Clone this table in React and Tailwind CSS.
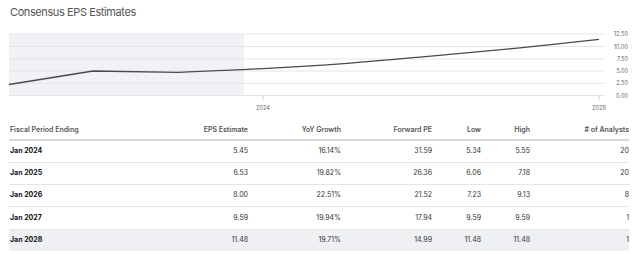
const points = [
  [9, 84.5],
  [93, 71],
  [178, 72.3],
  [263, 68.6],
  [347, 63.3],
  [431, 56.1],
  [515, 48.3],
  [599, 39.3],
];

const gridY = [34, 46.5, 59, 71, 83.3, 95.5];
const yLabels = ["12.50", "10.00", "7.50", "5.00", "2.50", "0.00"];

const rows = [
  { period: "Jan 2024", eps: "5.45", yoy: "16.14%", pe: "31.59", low: "5.34", high: "5.55", n: "20" },
  { period: "Jan 2025", eps: "6.53", yoy: "19.82%", pe: "26.36", low: "6.06", high: "7.18", n: "20" },
  { period: "Jan 2026", eps: "8.00", yoy: "22.51%", pe: "21.52", low: "7.23", high: "9.13", n: "8" },
  { period: "Jan 2027", eps: "9.59", yoy: "19.94%", pe: "17.94", low: "9.59", high: "9.59", n: "1" },
  { period: "Jan 2028", eps: "11.48", yoy: "19.71%", pe: "14.99", low: "11.48", high: "11.48", n: "1" },
];

// straight lines for the history, a gentle curve for the estimates
function linePath(pts) {
  let d = `M${pts[0][0]},${pts[0][1]} L${pts[1][0]},${pts[1][1]} L${pts[2][0]},${pts[2][1]}`;
  for (let i = 2; i < pts.length - 1; i++) {
    const p0 = pts[Math.max(i - 1, 2)];
    const p1 = pts[i];
    const p2 = pts[i + 1];
    const p3 = pts[Math.min(i + 2, pts.length - 1)];
    const t = 6;
    const c1 = [p1[0] + (p2[0] - p0[0]) / t, p1[1] + (p2[1] - p0[1]) / t];
    const c2 = [p2[0] - (p3[0] - p1[0]) / t, p2[1] - (p3[1] - p1[1]) / t];
    d += ` C${c1[0]},${c1[1]} ${c2[0]},${c2[1]} ${p2[0]},${p2[1]}`;
  }
  return d;
}

function EpsChart() {
  return (
    <svg width="640" height="88" viewBox="0 28 640 88" className="block">
      <rect x="9" y="34" width="235" height="61.5" fill="#f1f2f5" />
      {gridY.map((y) => (
        <line key={y} x1="9" x2="605" y1={y} y2={y} stroke="#e4e5e8" strokeWidth="1" />
      ))}
      <line x1="263" x2="263" y1="96" y2="100" stroke="#d0d0d0" strokeWidth="1" />
      <line x1="599" x2="599" y1="96" y2="100" stroke="#d0d0d0" strokeWidth="1" />
      <path d={linePath(points)} fill="none" stroke="#4a4a4a" strokeWidth="1.3" strokeLinejoin="round" />
      {yLabels.map((label, i) => (
        <text
          key={label}
          x="628"
          y={gridY[i] + 2}
          textAnchor="end"
          fontSize="5.6"
          fill="#666"
          fontFamily="Inter, sans-serif"
        >
          {label}
        </text>
      ))}
      <text x="263" y="110" textAnchor="middle" fontSize="5.6" fill="#666" fontFamily="Inter, sans-serif">
        2024
      </text>
      <text x="599" y="110" textAnchor="middle" fontSize="5.6" fill="#666" fontFamily="Inter, sans-serif">
        2028
      </text>
    </svg>
  );
}

export default function App() {
  const numCell = "text-right font-normal text-[#333]";
  return (
    <div className="h-[254px] w-[640px] overflow-hidden bg-white font-['Inter',sans-serif]">
      <h2 className="pl-[10px] pt-[5px] text-[11px] leading-[14px] tracking-[-0.4px] font-normal text-[#555]">
        Consensus EPS Estimates
      </h2>
      <div className="mt-[9px]">
        <EpsChart />
      </div>
      <div className="ml-[9px] mt-[8px] w-[620px]">
        <table className="w-[620px] table-fixed border-collapse text-[7px]">
          <colgroup>
            <col className="w-[141px]" />
            <col className="w-[98px]" />
            <col className="w-[93px]" />
            <col className="w-[91px]" />
            <col className="w-[49px]" />
            <col className="w-[49px]" />
            <col className="w-[99px]" />
          </colgroup>
          <thead>
            <tr className="h-[16px] border-b-2 border-[#d9d9dc] text-[#555]">
              <th className="pl-[1px] pb-[3px] text-left font-semibold">Fiscal Period Ending</th>
              <th className="pb-[3px] text-right font-semibold">EPS Estimate</th>
              <th className="pb-[3px] text-right font-semibold">YoY Growth</th>
              <th className="pb-[3px] text-right font-semibold">Forward PE</th>
              <th className="pb-[3px] text-right font-semibold">Low</th>
              <th className="pb-[3px] text-right font-semibold">High</th>
              <th className="pb-[3px] text-right font-semibold"># of Analysts</th>
            </tr>
          </thead>
          <tbody>
            {rows.map((r, i) => (
              <tr
                key={r.period}
                className={`h-[22.3px] ${
                  i === rows.length - 1 ? "bg-[#eff0f3]" : "border-b border-[#e4e5e8]"
                }`}
              >
                <td className="pl-[1px] text-left font-bold text-[#111]">{r.period}</td>
                <td className={numCell}>{r.eps}</td>
                <td className={numCell}>{r.yoy}</td>
                <td className={numCell}>{r.pe}</td>
                <td className={numCell}>{r.low}</td>
                <td className={numCell}>{r.high}</td>
                <td className={numCell}>{r.n}</td>
              </tr>
            ))}
          </tbody>
        </table>
      </div>
    </div>
  );
}
